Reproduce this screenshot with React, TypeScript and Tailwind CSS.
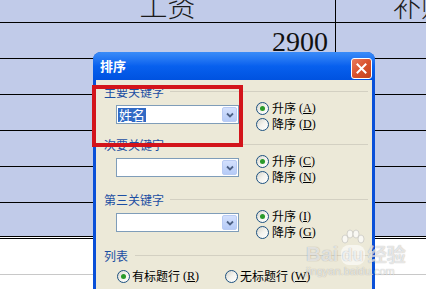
import React from "react";

const Radio = ({ checked }: { checked?: boolean }) => (
  <span className="w-[13px] h-[13px] rounded-full border border-[#1c5180] bg-linear-to-br from-[#d6d5cc] via-[#f4f3ee] to-white flex items-center justify-center shrink-0">
    {checked ? <span className="w-[5px] h-[5px] rounded-full bg-[#2a9a2a]" /> : null}
  </span>
);

const Key = ({ k }: { k: string }) => (
  <span className="ml-[3px] font-['Liberation_Serif',serif] text-[12px] text-black">
    (<span className="underline">{k}</span>)
  </span>
);

const RadioRow = ({ checked, label, k }: { checked?: boolean; label: string; k: string }) => (
  <div className="h-[16px] flex items-center">
    <Radio checked={checked} />
    <span className="ml-[3px] text-[12px] leading-[14px] text-black">{label}</span>
    <Key k={k} />
  </div>
);

const Combo = ({ value }: { value?: string }) => (
  <div className="mt-[5px] ml-[12px] w-[123px] h-[19px] border border-[#7f9db9] bg-white flex items-stretch shrink-0">
    <div className="flex-1 flex items-center pl-[1px]">
      {value ? (
        <span className="bg-[#316ac5] text-white text-[13px] leading-[14px] px-[1px]">{value}</span>
      ) : null}
    </div>
    <div className="w-[15px] m-[1px] rounded-[2px] bg-linear-to-b from-[#d3e0fd] to-[#b6cbf7] border border-[#b9cbf3] flex items-center justify-center">
      <svg width="8" height="6" viewBox="0 0 8 6">
        <path d="M1 1.5 L4 4.5 L7 1.5" fill="none" stroke="#4d6185" strokeWidth="1.8" />
      </svg>
    </div>
  </div>
);

const Group = ({ label, value, a, b, mt }: { label: string; value?: string; a: string; b: string; mt: string }) => (
  <div className={"flex flex-col " + mt}>
    <div className="h-[13px] flex items-center">
      <span className="text-[12px] leading-[13px] text-[#1c4fa3]">{label}</span>
      <div className="flex-1 h-px bg-[#d3d0c2] ml-[6px]" />
    </div>
    <div className="flex mt-[2px]">
      <Combo value={value} />
      <div className="flex flex-col ml-[17px]">
        <RadioRow checked label="升序" k={a} />
        <RadioRow label="降序" k={b} />
      </div>
    </div>
  </div>
);

const Row = ({ h, children }: { h: string; children?: React.ReactNode }) => (
  <div className={"flex bg-[#c1cbe9] border-b border-black overflow-hidden " + h}>
    <div className="w-[336px] shrink-0 border-r border-black flex justify-end overflow-hidden">{children}</div>
    <div className="flex-1" />
  </div>
);

export default function App() {
  return (
    <div className="relative w-[426px] h-[289px] overflow-hidden bg-white font-['Noto_Sans_CJK_SC',sans-serif]">
      {/* spreadsheet */}
      <div className="flex flex-col">
        <div className="h-[23px] flex bg-[#c1cbe9] border-b border-black overflow-hidden">
          <div className="w-[336px] shrink-0 border-r border-black flex justify-center overflow-hidden">
            <span className="text-[28px] leading-[28px] mt-[-9px] text-[#1a1a1a] font-light whitespace-nowrap">工资</span>
          </div>
          <div className="flex-1 overflow-hidden pl-[57px]">
            <span className="block text-[28px] leading-[28px] mt-[-9px] text-[#1a1a1a] font-light whitespace-nowrap">补贴</span>
          </div>
        </div>
        <Row h="h-[36px]">
          <span className="pt-[5px] pr-[7px] font-['Liberation_Serif',serif] text-[28px] leading-[28px] text-[#111]">2900</span>
        </Row>
        <Row h="h-[36px]" />
        <Row h="h-[36px]" />
        <Row h="h-[36px]" />
        <Row h="h-[36px]" />
        <Row h="h-[34px]" />
        <div className="h-[1px] bg-white" />
        <div className="h-[1px] bg-black" />
        <div className="h-[35px] bg-white" />
        <div className="h-[1px] bg-[#c8c8c8]" />
      </div>

      {/* dialog */}
      <div className="absolute left-[93px] top-[52px] w-[282px] h-[250px] rounded-t-[8px] bg-[#0a50d8] flex flex-col overflow-hidden">
        <div className="h-[28px] shrink-0 bg-linear-to-b from-[#3a8cf8] via-[#0860ee] to-[#0052e0] flex items-start">
          <span className="mt-[7px] ml-[7px] text-[13px] leading-[14px] font-bold text-white">排序</span>
          <div className="ml-auto mr-[3px] mt-[6px] w-[21px] h-[21px] rounded-[3px] border border-white bg-linear-to-br from-[#e87a5c] via-[#d9522c] to-[#c2421c] flex items-center justify-center">
            <svg width="11" height="11" viewBox="0 0 11 11">
              <path d="M1.5 1.5 L9.5 9.5 M9.5 1.5 L1.5 9.5" stroke="white" strokeWidth="2" strokeLinecap="square" />
            </svg>
          </div>
        </div>
        <div className="flex-1 mx-[3px] bg-[#ece9d8] flex flex-col pl-[8px] pr-[4px] pt-[5px]">
          <Group label="主要关键字" value="姓名" a="A" b="D" mt="mt-0" />
          <Group label="次要关键字" a="C" b="N" mt="mt-[6px]" />
          <Group label="第三关键字" a="I" b="G" mt="mt-[8px]" />
          <div className="h-[13px] flex items-center mt-[9px]">
            <span className="text-[12px] leading-[13px] text-[#1c4fa3]">列表</span>
            <div className="flex-1 h-px bg-[#d3d0c2] ml-[7px]" />
          </div>
          <div className="flex mt-[6px] h-[16px] items-center pl-[13px]">
            <div className="w-[108px] flex items-center">
              <Radio checked />
              <span className="ml-[2px] text-[12px] leading-[14px] text-black">有标题行</span>
              <Key k="R" />
            </div>
            <div className="flex items-center">
              <Radio />
              <span className="ml-[2px] text-[12px] leading-[14px] text-black">无标题行</span>
              <Key k="W" />
            </div>
          </div>
        </div>
      </div>

      {/* red highlight */}
      <div className="absolute left-[92px] top-[85px] w-[151px] h-[62px] border-[4px] border-[#d3141b]" />

      {/* watermark */}
      <div className="absolute left-[306px] top-[229px] flex flex-col pointer-events-none">
        <div className="flex items-end h-[36px]">
          <span className="text-[21px] leading-[22px] font-bold text-white/70 font-['Liberation_Sans',sans-serif] [text-shadow:0_0_1px_rgba(0,0,0,0.35)]">Bai</span>
          <div className="relative flex flex-col items-center ml-[1px]">
            <svg width="26" height="16" viewBox="0 0 26 16" className="opacity-70">
              <ellipse cx="5" cy="10" rx="3" ry="4" fill="white" stroke="#aaa" strokeWidth="0.6" />
              <ellipse cx="10" cy="5" rx="3" ry="4" fill="white" stroke="#aaa" strokeWidth="0.6" />
              <ellipse cx="16" cy="5" rx="3" ry="4" fill="white" stroke="#aaa" strokeWidth="0.6" />
              <ellipse cx="21" cy="10" rx="3" ry="4" fill="white" stroke="#aaa" strokeWidth="0.6" />
            </svg>
            <span className="rounded-[8px] bg-white/60 px-[1px] text-[18px] leading-[20px] font-bold text-white/80 font-['Liberation_Sans',sans-serif] [text-shadow:0_0_1px_rgba(0,0,0,0.35)]">du</span>
          </div>
          <span className="ml-[2px] text-[19px] leading-[22px] font-bold text-white/70 [text-shadow:0_0_1px_rgba(0,0,0,0.35)]">经验</span>
        </div>
        <span className="mt-[1px] text-[11px] leading-[11px] text-white/70 font-['Liberation_Sans',sans-serif] [text-shadow:0_0_1px_rgba(0,0,0,0.35)]">jingyan.baidu.com</span>
      </div>
    </div>
  );
}
